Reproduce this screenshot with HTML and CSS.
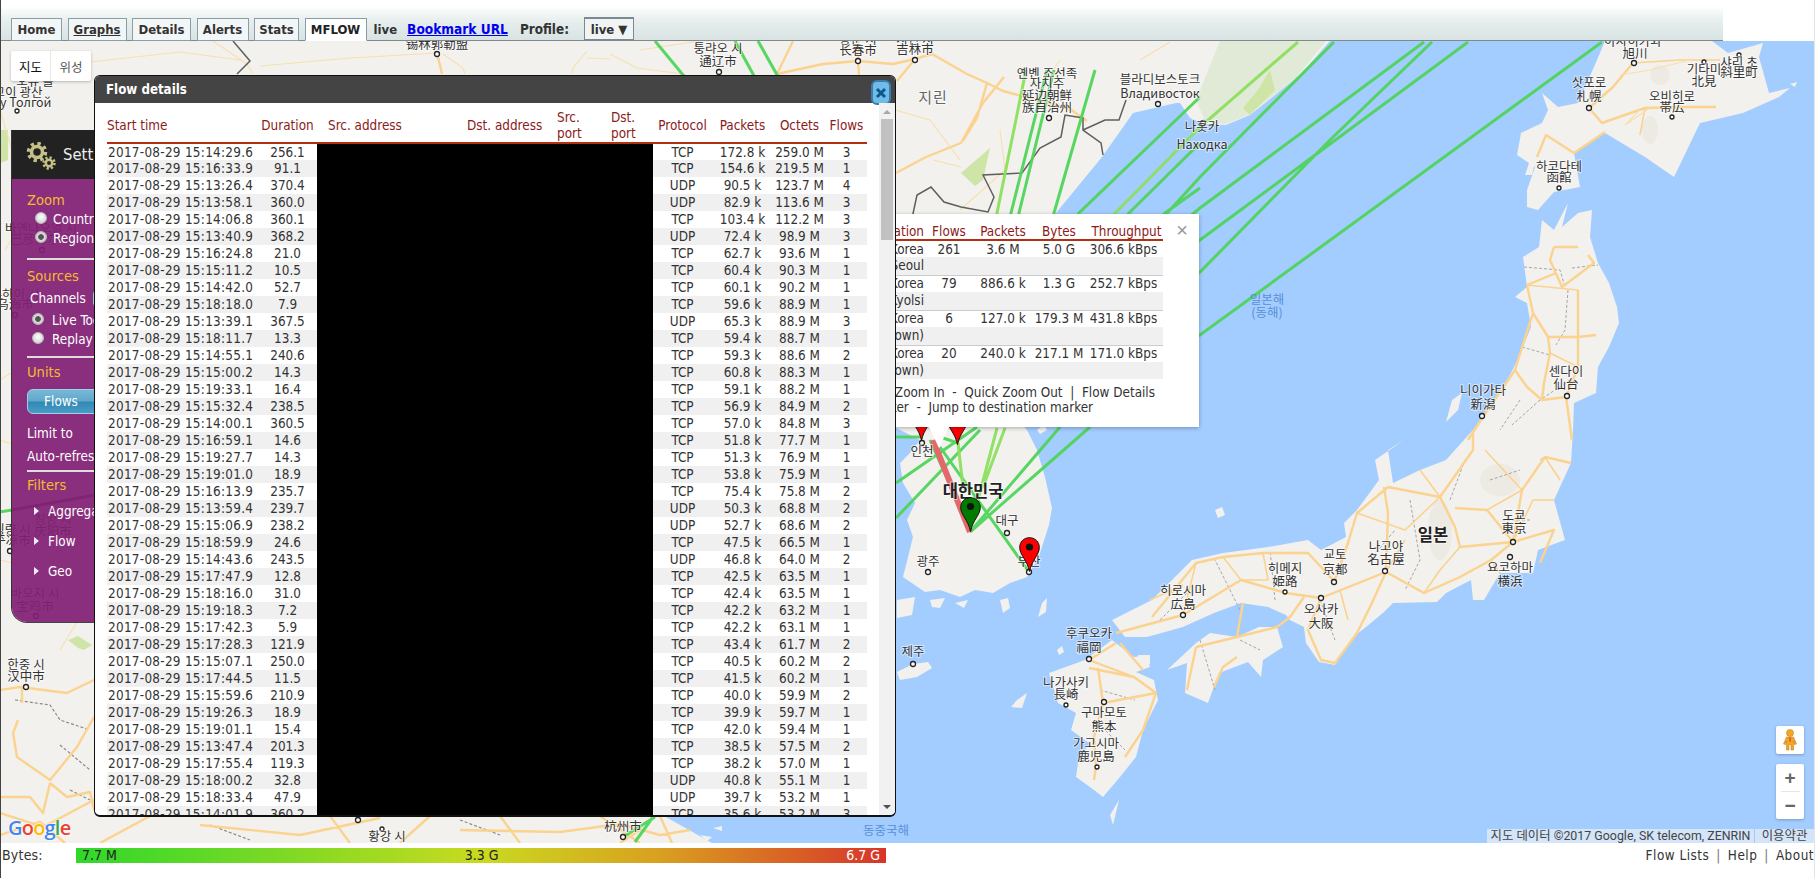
FILE: index.html
```html
<!DOCTYPE html>
<html lang="en">
<head>
<meta charset="utf-8">
<title>MFLOW</title>
<link rel="stylesheet" href="styles.css">
</head>
<body>
<div class="page">
  <header class="topbar">
    <nav class="tabs">
      <a class="tab t-home">Home</a>
      <a class="tab t-graphs under">Graphs</a>
      <a class="tab t-details">Details</a>
      <a class="tab t-alerts">Alerts</a>
      <a class="tab t-stats">Stats</a>
      <a class="tab t-mflow active">MFLOW</a>
    </nav>
    <span class="top-text t-live">live</span>
    <a class="bookmark">Bookmark URL</a>
    <span class="top-text t-profile">Profile:</span>
    <button class="profile-btn">live ▼</button>
  </header>

  <main class="map">
    <svg class="mapsvg" viewBox="1 41 1813 802" width="1813" height="802" xmlns="http://www.w3.org/2000/svg">
      <defs>
        <path id="pin" d="M10.5 .7C4.7 .7 .7 5 .7 10.5C.7 18 8 22.500 10.500 34.500C13 22.500 20.300 18 20.300 10.500C20.300 5 16.300 .7 10.500 .7Z"/>
        <clipPath id="above"><rect x="0" y="41" width="1817" height="384"/></clipPath>
      </defs>
      <rect class="water" x="0" y="41" width="1817" height="802"/>
      <!-- mainland -->
      <path class="land" d="M0 41H1330L1300 75L1250 115L1226 125L1206 124L1190 118L1180 103L1176 103L1133 113L1102 157L1056 213L1040 300L1000 400L1027 430L1037 450L1045 477L1052 508L1049 525L1040 553L1034 565L1027 577L1010 583L993 593L975 590L960 597L940 590L925 592L903 577L908 557L913 537L907 520L915 503L903 483L900 463L910 453L920 440L880 420L800 470L700 700L666 817L689 830L712 843H0Z"/>
      <path class="rus" d="M1196 100L1220 41H1326L1296 78L1248 115L1226 124L1206 123Z"/>
      <path class="park" d="M961 173L990 148L983 180L975 186Z"/>
      <path class="park" d="M0 130H8V160L0 163Z"/>
      <path class="park" d="M1258 90L1270 70L1275 90L1250 115L1243 108Z"/>
      <path class="park" d="M68 640L78 636L92 645L84 650L78 648Z"/>
      <!-- Japan -->
      <path class="land" d="M1542 93L1558 107L1578 103L1594 67L1605 41H1712L1728 53L1763 43L1759 57L1769 93L1790 88L1779 97L1743 113L1700 123L1674 177L1645 157L1605 133L1594 140L1574 153L1580 187L1554 192L1538 210L1527 207L1527 190L1535 167L1517 155L1521 133L1542 123L1548 110Z"/>
      <path class="land" d="M1568 203L1562 227L1578 213L1592 210L1590 237L1598 263L1609 283L1617 307L1619 323L1609 347L1598 367L1596 393L1574 403L1573 430L1571 463L1554 500L1565 540L1538 550L1533 573L1500 573L1484 600L1473 600L1471 580L1446 593L1437 602L1393 603L1384 612L1366 627L1353 637L1335 665L1319 662L1306 643L1304 627L1290 620L1286 615L1268 607L1241 603L1214 613L1183 627L1147 637L1125 637L1112 620L1152 600L1192 560L1223 553L1268 547L1308 540L1321 550L1346 537L1344 523L1357 510L1379 480L1375 460L1404 440L1388 450L1393 483L1420 470L1446 460L1473 430L1495 400L1511 373L1519 357L1531 327L1527 303L1515 297L1527 287L1523 257L1539 247L1542 220L1554 230Z"/>
      <path class="land" d="M1167 670L1196 643L1210 633L1237 637L1259 627L1277 627L1283 647L1263 660L1261 677L1248 662L1219 673L1208 703L1185 693L1187 663Z"/>
      <path class="land" d="M1112 640L1134 657L1147 655L1150 667L1136 672L1154 680L1158 700L1143 730L1136 757L1120 777L1103 797L1094 790L1076 777L1078 763L1089 743L1071 730L1076 713L1058 703L1049 673L1085 660Z"/>
      <path class="land" d="M1446 422L1452 400L1462 393L1458 410Z"/>
      <path class="land" d="M1525 175L1530 160L1535 162L1532 175Z"/>
      <path class="land" d="M1038 617L1042 603L1047 598L1046 612Z"/>
      <path class="land" d="M1011 707L1017 700L1027 693L1022 708Z"/>
      <path class="land" d="M1215 510L1222 507L1225 515L1218 518Z"/>
      <path class="land" d="M1057 650L1062 646L1064 652L1059 655Z"/>
      <path class="land" d="M1138 655L1150 655L1150 664L1140 662Z"/>
      <path class="land" d="M1110 815L1116 805L1119 800L1113 825Z"/>
      <path class="land" d="M1790 84L1797 82L1795 87Z"/>
      <!-- Jeju and southern islets -->
      <path class="land" d="M897 672L913 664L928 662L932 668L917 677L900 680Z"/>
      <path class="land" d="M897 600L915 597L912 615L897 618Z"/>
      <path class="land" d="M930 600L945 598L940 608L932 607Z"/>
      <path class="land" d="M1000 600L1008 598L1010 608L1003 613Z"/>
      <path class="land" d="M955 603L968 600L964 608Z"/>
      <path class="land" d="M1037 430L1044 425L1047 430L1040 434Z"/>
      <path class="land" d="M713 828L722 826L722 831Z"/>
      <path class="land" d="M700 835L712 837L707 841Z"/>
      <!-- relief -->
      <ellipse class="relief" cx="1440" cy="530" rx="12" ry="30"/>
      <ellipse class="relief" cx="1500" cy="480" rx="20" ry="16"/>
      <ellipse class="relief" cx="1650" cy="130" rx="8" ry="14"/>
      <ellipse class="relief" cx="1660" cy="75" rx="10" ry="10"/>
      <!-- prefecture dashes -->
      <path class="dash" d="M1524 267L1560 270L1565 287M1568 290L1565 330L1556 345M1522 347L1550 355M1572 268L1598 265M1540 400L1512 425M1570 380L1540 400M1410 500L1420 560L1405 590M1450 500L1465 460M1490 480L1520 470M1530 520L1500 520M1240 610L1215 560M1275 600L1270 550M1200 640L1215 690M1240 640L1260 650M1100 690L1135 700M1095 720L1125 750M1320 600L1335 640M1370 560L1395 530M1160 620L1190 590M1520 400L1500 430"/>
      <path class="dash dark" d="M15 700L50 705L60 720L90 730M60 745L90 770M70 790L90 800M460 820L500 835M210 825L250 840"/>
      <!-- roads -->
      <path class="road" d="M1589 108L1613 87L1633 63M1589 108L1602 123L1645 108L1688 107L1716 107M1605 132L1574 153L1546 135L1537 157"/>
      <path class="road" d="M1554 247L1578 247M1554 247L1550 260L1562 287L1594 263L1588 255M1556 273L1527 285L1533 313L1548 337L1550 353L1544 383L1542 400L1566 397M1578 290L1578 367L1566 397L1572 440M1533 313L1519 357L1515 370L1483 417L1468 440M1548 337L1578 337L1596 335M1515 370L1527 387L1542 400"/>
      <path class="road" d="M1571 463L1545 457L1522 490L1513 542M1513 542L1460 547L1455 527L1440 497L1473 450L1473 430M1440 497L1388 487L1357 513L1348 543L1335 580M1513 542L1487 510L1455 508M1513 542L1554 530L1540 563M1513 542L1491 560L1460 577L1424 593L1386 572L1321 598L1286 593L1241 580L1183 615L1116 633M1386 572L1388 513L1384 487M1335 582L1308 553L1263 553L1223 557L1196 563L1152 617M1321 598L1308 630L1321 660L1335 663L1357 633L1370 607L1386 572"/>
      <path class="road" d="M1196 647L1237 637L1277 627L1290 617L1304 597M1237 637L1243 603M1196 647L1187 690M1214 687L1223 667L1237 657M1089 660L1116 643M1089 660L1134 677L1156 693L1143 730L1125 757M1089 668L1134 677M1103 703L1156 693M1098 668L1103 703L1094 737L1096 767L1094 780M1120 643L1143 670"/>
      <path class="road minor" d="M1420 470L1440 497M1460 547L1440 570L1424 593M1491 560L1500 573M1513 542L1533 500L1554 500M1522 490L1487 510M1405 540L1386 572M1357 513L1405 530L1440 497M1340 590L1348 620M1263 553L1268 580L1241 580M1223 557L1241 580M1196 563L1183 615M1150 600L1183 585M1645 108L1640 135M1633 63L1680 60L1720 60M1527 285L1578 290M1550 353L1578 367M1540 460L1545 457L1560 480M1485 450L1522 490"/>
      <path class="road" d="M896 173L926 157L961 143L983 103L1004 77M932 54L967 74L987 83L1003 91L1070 109L1087 121M777 74L823 64L858 61L893 64L915 59L897 81M858 41L858 61L859 75M777 74L793 41M987 83L977 118L963 141M915 59L932 54M437 53L442 74M0 690L20 687L43 690L67 693L94 680M22 687L22 703M18 720L13 733L17 757L50 780L77 747L94 717M50 783L67 797L90 792L94 810M0 797L30 797L43 813L50 783M0 813L43 827L94 800"/>
      <path class="road" d="M0 835L40 822L65 843M100 843L150 816M200 825L300 835L380 818M400 843L430 816M500 816L520 843M560 832L620 824L660 835L690 830M600 816L640 843M460 830L560 832M620 843L640 830M660 816L672 843M330 816L350 843"/>
      <path class="thin" d="M213 41L247 64L253 74M443 54L463 68L465 74M587 51L573 68L572 74M587 58L610 59M610 54L637 68L683 74M90 62L180 52L240 60M260 66L350 58L437 53M933 160L961 167M895 110L930 120L960 160M1000 130L1005 170L960 210M1040 90L1060 60M1640 110L1625 125L1650 108M1690 60L1650 70L1620 75M0 110L12 150M5 250L30 210L90 190M0 380L30 360L90 300M0 440L60 460L90 430M30 540L90 520M0 560L40 570L80 590M90 600L60 650M640 50L700 41M1140 60L1170 42"/>
      <path class="border" d="M911 223L917 195L931 187L944 202L961 207L988 212L994 197L983 175L1022 173L1040 148L1061 137L1065 115L1083 118L1083 130L1101 143L1103 155M1083 130L1105 120L1119 120L1126 100M233 41L250 61L237 74"/>
      <!-- flows -->
      <g clip-path="url(#above)">
        <path class="flow" d="M655 41L985 440M735 41L985 500M758 41L985 445"/>
        <path class="flow lite" d="M1026 70L997 213L958 430M1298 42L1200 127L1000 330L983 487"/>
        <path class="flow" d="M1047 70L1011 213L963 487M1054 70L1019 213L985 440M1095 70L1054 213L1000 420M1200 97L1079 213L960 440M1200 143L1129 213L940 430M1200 188L1165 213L935 440M1334 42L1200 177L970 430M1424 42L1200 208L930 430M1432 42L1330 140L1200 272L925 440M1468 42L1200 240L915 440M1602 42L1200 335L960 440"/>
      </g>
      <path class="flow" d="M896 483L977 427M896 518L980 430M970 532L1060 427M970 532L1090 427M1029 572L940 447M970 530L930 440M896 437L920 437M940 437L958 443M623 837L655 817M635 842L653 817M0 512L12 510"/>
      <path class="flow lite" d="M983 487L1005 428M978 500L997 428M963 487L958 443"/>
      <path class="flowred" d="M970 532L933 440"/>
      <path class="flowgray" d="M12 510L95 495"/>
      <!-- city dots -->
      <g class="dots">
        <circle cx="437" cy="54" r="2.500"/><circle cx="719" cy="72" r="2.500"/><circle cx="858" cy="61" r="2.500"/><circle cx="915" cy="60" r="2.500"/><circle cx="1049" cy="118" r="2.500"/><circle cx="1158" cy="104" r="2.500"/><circle cx="1203" cy="123" r="2.500"/><circle cx="1634" cy="63" r="2.500"/><circle cx="1739" cy="55" r="2"/><circle cx="1704" cy="62" r="2"/><circle cx="1589" cy="108" r="2.500"/><circle cx="1672" cy="117" r="2"/><circle cx="1559" cy="188" r="2"/><circle cx="1482" cy="416" r="2.500"/><circle cx="1567" cy="396" r="2.500"/><circle cx="1513" cy="542" r="2.500"/><circle cx="1510" cy="557" r="2.500"/><circle cx="1385" cy="571" r="2.500"/><circle cx="1334" cy="582" r="2.500"/><circle cx="1285" cy="592" r="2"/><circle cx="1321" cy="598" r="2.500"/><circle cx="1183" cy="615" r="2.500"/><circle cx="1089" cy="659" r="2.500"/><circle cx="1066" cy="705" r="2"/><circle cx="1104" cy="702" r="2.500"/><circle cx="1097" cy="767" r="2"/><circle cx="922" cy="443" r="2.500"/><circle cx="1007" cy="533" r="2.500"/><circle cx="1029" cy="572" r="2.500"/><circle cx="928" cy="572" r="2.500"/><circle cx="913" cy="664" r="2.500"/><circle cx="26" cy="687" r="2.500"/><circle cx="36" cy="616" r="2.500"/><circle cx="10" cy="551" r="2.500"/><circle cx="42" cy="250" r="2.500"/><circle cx="15" cy="315" r="2.500"/><circle cx="17" cy="111" r="2"/><circle cx="358" cy="820" r="2.500"/><circle cx="382" cy="829" r="2"/><circle cx="623" cy="837" r="2.500"/>
      </g>
      <!-- labels -->
      <g class="labels">
        <text x="437" y="49">锡林郭勒盟</text>
        <text x="718" y="53">퉁랴오 시</text><text x="718" y="66">通辽市</text>
        <text x="858" y="44">창춘 시</text><text x="858" y="55">长春市</text>
        <text x="915" y="44">지린 시</text><text x="915" y="54">吉林市</text>
        <text class="big" x="933" y="103">지린</text>
        <text x="1047" y="78">옌볜 조선족</text><text x="1047" y="88">자치주</text><text x="1047" y="100">延边朝鲜</text><text x="1047" y="112">族自治州</text>
        <text x="1160" y="84">블라디보스토크</text><text x="1160" y="98">Владивосток</text>
        <text x="1202" y="131">나홋카</text><text x="1202" y="149">Находка</text>
        <text x="1633" y="46">아사히카와</text><text x="1635" y="58">旭川</text>
        <text x="1739" y="67">샤리 초</text><text x="1739" y="77">斜里町</text>
        <text x="1704" y="74">기타미</text><text x="1704" y="86">北見</text>
        <text x="1589" y="87">삿포로</text><text x="1589" y="101">札幌</text>
        <text x="1672" y="101">오비히로</text><text x="1672" y="112">帯広</text>
        <text x="1559" y="171">하코다테</text><text x="1559" y="182">函館</text>
        <text x="1483" y="395">니이가타</text><text x="1483" y="409">新潟</text>
        <text x="1566" y="376">센다이</text><text x="1566" y="389">仙台</text>
        <text class="sea" x="1267" y="304">일본해</text><text class="sea" x="1267" y="317">(동해)</text>
        <text x="1514" y="520">도쿄</text><text x="1514" y="533">東京</text>
        <text class="bold" x="1433" y="541">일본</text>
        <text x="1510" y="572">요코하마</text><text x="1510" y="586">横浜</text>
        <text x="1386" y="551">나고야</text><text x="1386" y="564">名古屋</text>
        <text x="1335" y="559">교토</text><text x="1335" y="574">京都</text>
        <text x="1285" y="573">히메지</text><text x="1285" y="586">姫路</text>
        <text x="1321" y="614">오사카</text><text x="1321" y="628">大阪</text>
        <text x="1183" y="595">히로시마</text><text x="1183" y="609">広島</text>
        <text x="1089" y="638">후쿠오카</text><text x="1089" y="652">福岡</text>
        <text x="1066" y="687">나가사키</text><text x="1066" y="699">長崎</text>
        <text x="1104" y="717">구마모토</text><text x="1104" y="731">熊本</text>
        <text x="1096" y="748">가고시마</text><text x="1096" y="761">鹿児島</text>
        <text x="922" y="456">인천</text>
        <text class="bold" x="973" y="497">대한민국</text>
        <text x="1007" y="525">대구</text>
        <text x="1029" y="566">부산</text>
        <text x="928" y="566">광주</text>
        <text x="913" y="656">제주</text>
        <text x="35" y="86">오유 틀</text><text x="18" y="97">고이 광산</text><text x="22" y="107">oy Толгой</text>
        <text x="41" y="233">바옌나오얼 시</text><text x="41" y="244">巴彦淖尔市</text>
        <text x="15" y="299">우하이 시</text><text x="15" y="309">乌海市</text>
        <text x="12" y="534">핑량 시</text><text x="12" y="545">平凉市</text>
        <text x="53" y="524">칭양 시</text><text x="53" y="536">庆阳市</text>
        <text x="35" y="598">바오지 시</text><text x="35" y="611">宝鸡市</text>
        <text x="26" y="669">한중 시</text><text x="26" y="681">汉中市</text>
        <text x="387" y="841">황강 시</text>
        <text x="623" y="831">杭州市</text>
        <text class="sea" x="886" y="835">동중국해</text>
      </g>
      <!-- markers -->
      <use class="pin-red" href="#pin" x="911" y="406"/>
      <use class="pin-red" href="#pin" x="947" y="410"/>
      <circle class="pin-eye" cx="921.500" cy="416" r="3.600"/>
      <circle class="pin-eye" cx="957.500" cy="420" r="3.600"/>
      <use class="pin-green" href="#pin" x="960" y="497"/>
      <circle class="pin-eye" cx="970.500" cy="506.500" r="3.600"/>
      <use class="pin-red" href="#pin" x="1019" y="537"/>
      <circle class="pin-eye" cx="1029.500" cy="547" r="3.600"/>
    </svg>

    <div class="maptype">
      <span class="mt-btn mt-on">지도</span>
      <span class="mt-btn">위성</span>
    </div>

    <aside class="settings">
      <div class="set-head">
        <svg class="gears" viewBox="0 0 30 28" width="30" height="28" xmlns="http://www.w3.org/2000/svg">
          <circle class="gear-teeth" cx="11" cy="10" r="8.500"/><circle class="gear" cx="11" cy="10" r="5.500"/>
          <circle class="gear-teeth small" cx="23" cy="21" r="5.500"/><circle class="gear small" cx="23" cy="21" r="3.200"/>
        </svg>
        <span class="set-title">Settings</span>
      </div>
      <div class="set-body">
        <div class="set-label">Zoom</div>
        <label class="radio-row"><input type="radio" name="zoom"><span>Country</span></label>
        <label class="radio-row"><input type="radio" name="zoom" checked><span>Region</span></label>
        <hr class="set-hr">
        <div class="set-label l-sources">Sources</div>
        <div class="channels"><span>Channels</span><span class="chan-btn">all</span></div>
        <label class="radio-row r-src"><input type="radio" name="src" checked><span>Live Tools</span></label>
        <label class="radio-row r-src2"><input type="radio" name="src"><span>Replay</span></label>
        <hr class="set-hr hr2">
        <div class="set-label l-units">Units</div>
        <button class="flows-btn">Flows</button>
        <div class="set-text t-limit">Limit to</div>
        <div class="set-text t-auto">Auto-refresh</div>
        <hr class="set-hr hr3">
        <div class="set-label l-filters">Filters</div>
        <div class="filter f-first"><i class="tri"></i>Aggregation</div>
        <div class="filter"><i class="tri"></i>Flow</div>
        <div class="filter"><i class="tri"></i>Geo</div>
      </div>
    </aside>

    <section class="popup">
      <button class="popup-x">×</button>
      <table class="ptable">
        <thead><tr><th class="p-dest">Destination</th><th>Flows</th><th>Packets</th><th>Bytes</th><th class="p-thru">Throughput</th></tr></thead>
        <tbody>
          <tr><td class="p-dest">South Korea</td><td>261</td><td>3.6 M</td><td>5.0 G</td><td>306.6 kBps</td></tr>
          <tr class="p-sub"><td class="p-dest">Seoul</td><td colspan="4"></td></tr>
          <tr><td class="p-dest">South Korea</td><td>79</td><td>886.6 k</td><td>1.3 G</td><td>252.7 kBps</td></tr>
          <tr class="p-sub"><td class="p-dest">Kyolsi</td><td colspan="4"></td></tr>
          <tr><td class="p-dest">South Korea</td><td>6</td><td>127.0 k</td><td>179.3 M</td><td>431.8 kBps</td></tr>
          <tr class="p-sub"><td class="p-dest">(unknown)</td><td colspan="4"></td></tr>
          <tr><td class="p-dest">South Korea</td><td>20</td><td>240.0 k</td><td>217.1 M</td><td>171.0 kBps</td></tr>
          <tr class="p-sub"><td class="p-dest">(unknown)</td><td colspan="4"></td></tr>
        </tbody>
      </table>
      <p class="p-actions a1">Quick Zoom In &nbsp;-&nbsp; Quick Zoom Out &nbsp;|&nbsp; Flow Details</p>
      <p class="p-actions a2">Jump to source marker &nbsp;-&nbsp; Jump to destination marker</p>
      <i class="pointer"></i>
    </section>

    <section class="modal">
      <div class="modal-title">Flow details</div>
      <button class="modal-close" aria-label="close">
        <svg viewBox="0 0 12 12" width="12" height="12" xmlns="http://www.w3.org/2000/svg"><path class="x-mark" d="M2 2L10 10M10 2L2 10"/></svg>
      </button>
      <div class="modal-body">
        <div class="scroll-area">
          <table class="ftable">
            <colgroup><col class="c-time"><col class="c-dur"><col class="c-src"><col class="c-dst"><col class="c-sp"><col class="c-dp"><col class="c-proto"><col class="c-pk"><col class="c-oc"><col class="c-fl"></colgroup>
            <thead><tr><th class="left">Start time</th><th>Duration</th><th class="left pad">Src. address</th><th class="left pad">Dst. address</th><th class="left pad">Src.<br>port</th><th class="left pad">Dst.<br>port</th><th>Protocol</th><th>Packets</th><th>Octets</th><th>Flows</th></tr></thead>
            <tbody>
              <tr><td>2017-08-29 15:14:29.6</td><td>256.1</td><td class="redact" colspan="4"></td><td>TCP</td><td>172.8 k</td><td>259.0 M</td><td>3</td></tr>
              <tr><td>2017-08-29 15:16:33.9</td><td>91.1</td><td class="redact" colspan="4"></td><td>TCP</td><td>154.6 k</td><td>219.5 M</td><td>1</td></tr>
              <tr><td>2017-08-29 15:13:26.4</td><td>370.4</td><td class="redact" colspan="4"></td><td>UDP</td><td>90.5 k</td><td>123.7 M</td><td>4</td></tr>
              <tr><td>2017-08-29 15:13:58.1</td><td>360.0</td><td class="redact" colspan="4"></td><td>UDP</td><td>82.9 k</td><td>113.6 M</td><td>3</td></tr>
              <tr><td>2017-08-29 15:14:06.8</td><td>360.1</td><td class="redact" colspan="4"></td><td>TCP</td><td>103.4 k</td><td>112.2 M</td><td>3</td></tr>
              <tr><td>2017-08-29 15:13:40.9</td><td>368.2</td><td class="redact" colspan="4"></td><td>UDP</td><td>72.4 k</td><td>98.9 M</td><td>3</td></tr>
              <tr><td>2017-08-29 15:16:24.8</td><td>21.0</td><td class="redact" colspan="4"></td><td>TCP</td><td>62.7 k</td><td>93.6 M</td><td>1</td></tr>
              <tr><td>2017-08-29 15:15:11.2</td><td>10.5</td><td class="redact" colspan="4"></td><td>TCP</td><td>60.4 k</td><td>90.3 M</td><td>1</td></tr>
              <tr><td>2017-08-29 15:14:42.0</td><td>52.7</td><td class="redact" colspan="4"></td><td>TCP</td><td>60.1 k</td><td>90.2 M</td><td>1</td></tr>
              <tr><td>2017-08-29 15:18:18.0</td><td>7.9</td><td class="redact" colspan="4"></td><td>TCP</td><td>59.6 k</td><td>88.9 M</td><td>1</td></tr>
              <tr><td>2017-08-29 15:13:39.1</td><td>367.5</td><td class="redact" colspan="4"></td><td>UDP</td><td>65.3 k</td><td>88.9 M</td><td>3</td></tr>
              <tr><td>2017-08-29 15:18:11.7</td><td>13.3</td><td class="redact" colspan="4"></td><td>TCP</td><td>59.4 k</td><td>88.7 M</td><td>1</td></tr>
              <tr><td>2017-08-29 15:14:55.1</td><td>240.6</td><td class="redact" colspan="4"></td><td>TCP</td><td>59.3 k</td><td>88.6 M</td><td>2</td></tr>
              <tr><td>2017-08-29 15:15:00.2</td><td>14.3</td><td class="redact" colspan="4"></td><td>TCP</td><td>60.8 k</td><td>88.3 M</td><td>1</td></tr>
              <tr><td>2017-08-29 15:19:33.1</td><td>16.4</td><td class="redact" colspan="4"></td><td>TCP</td><td>59.1 k</td><td>88.2 M</td><td>1</td></tr>
              <tr><td>2017-08-29 15:15:32.4</td><td>238.5</td><td class="redact" colspan="4"></td><td>TCP</td><td>56.9 k</td><td>84.9 M</td><td>2</td></tr>
              <tr><td>2017-08-29 15:14:00.1</td><td>360.5</td><td class="redact" colspan="4"></td><td>TCP</td><td>57.0 k</td><td>84.8 M</td><td>3</td></tr>
              <tr><td>2017-08-29 15:16:59.1</td><td>14.6</td><td class="redact" colspan="4"></td><td>TCP</td><td>51.8 k</td><td>77.7 M</td><td>1</td></tr>
              <tr><td>2017-08-29 15:19:27.7</td><td>14.3</td><td class="redact" colspan="4"></td><td>TCP</td><td>51.3 k</td><td>76.9 M</td><td>1</td></tr>
              <tr><td>2017-08-29 15:19:01.0</td><td>18.9</td><td class="redact" colspan="4"></td><td>TCP</td><td>53.8 k</td><td>75.9 M</td><td>1</td></tr>
              <tr><td>2017-08-29 15:16:13.9</td><td>235.7</td><td class="redact" colspan="4"></td><td>TCP</td><td>75.4 k</td><td>75.8 M</td><td>2</td></tr>
              <tr><td>2017-08-29 15:13:59.4</td><td>239.7</td><td class="redact" colspan="4"></td><td>UDP</td><td>50.3 k</td><td>68.8 M</td><td>2</td></tr>
              <tr><td>2017-08-29 15:15:06.9</td><td>238.2</td><td class="redact" colspan="4"></td><td>UDP</td><td>52.7 k</td><td>68.6 M</td><td>2</td></tr>
              <tr><td>2017-08-29 15:18:59.9</td><td>24.6</td><td class="redact" colspan="4"></td><td>TCP</td><td>47.5 k</td><td>66.5 M</td><td>1</td></tr>
              <tr><td>2017-08-29 15:14:43.6</td><td>243.5</td><td class="redact" colspan="4"></td><td>UDP</td><td>46.8 k</td><td>64.0 M</td><td>2</td></tr>
              <tr><td>2017-08-29 15:17:47.9</td><td>12.8</td><td class="redact" colspan="4"></td><td>TCP</td><td>42.5 k</td><td>63.5 M</td><td>1</td></tr>
              <tr><td>2017-08-29 15:18:16.0</td><td>31.0</td><td class="redact" colspan="4"></td><td>TCP</td><td>42.4 k</td><td>63.5 M</td><td>1</td></tr>
              <tr><td>2017-08-29 15:19:18.3</td><td>7.2</td><td class="redact" colspan="4"></td><td>TCP</td><td>42.2 k</td><td>63.2 M</td><td>1</td></tr>
              <tr><td>2017-08-29 15:17:42.3</td><td>5.9</td><td class="redact" colspan="4"></td><td>TCP</td><td>42.2 k</td><td>63.1 M</td><td>1</td></tr>
              <tr><td>2017-08-29 15:17:28.3</td><td>121.9</td><td class="redact" colspan="4"></td><td>TCP</td><td>43.4 k</td><td>61.7 M</td><td>2</td></tr>
              <tr><td>2017-08-29 15:15:07.1</td><td>250.0</td><td class="redact" colspan="4"></td><td>TCP</td><td>40.5 k</td><td>60.2 M</td><td>2</td></tr>
              <tr><td>2017-08-29 15:17:44.5</td><td>11.5</td><td class="redact" colspan="4"></td><td>TCP</td><td>41.5 k</td><td>60.2 M</td><td>1</td></tr>
              <tr><td>2017-08-29 15:15:59.6</td><td>210.9</td><td class="redact" colspan="4"></td><td>TCP</td><td>40.0 k</td><td>59.9 M</td><td>2</td></tr>
              <tr><td>2017-08-29 15:19:26.3</td><td>18.9</td><td class="redact" colspan="4"></td><td>TCP</td><td>39.9 k</td><td>59.7 M</td><td>1</td></tr>
              <tr><td>2017-08-29 15:19:01.1</td><td>15.4</td><td class="redact" colspan="4"></td><td>TCP</td><td>42.0 k</td><td>59.4 M</td><td>1</td></tr>
              <tr><td>2017-08-29 15:13:47.4</td><td>201.3</td><td class="redact" colspan="4"></td><td>TCP</td><td>38.5 k</td><td>57.5 M</td><td>2</td></tr>
              <tr><td>2017-08-29 15:17:55.4</td><td>119.3</td><td class="redact" colspan="4"></td><td>TCP</td><td>38.2 k</td><td>57.0 M</td><td>1</td></tr>
              <tr><td>2017-08-29 15:18:00.2</td><td>32.8</td><td class="redact" colspan="4"></td><td>UDP</td><td>40.8 k</td><td>55.1 M</td><td>1</td></tr>
              <tr><td>2017-08-29 15:18:33.4</td><td>47.9</td><td class="redact" colspan="4"></td><td>UDP</td><td>39.7 k</td><td>53.2 M</td><td>1</td></tr>
              <tr><td>2017-08-29 15:14:01.9</td><td>360.2</td><td class="redact" colspan="4"></td><td>TCP</td><td>35.6 k</td><td>53.2 M</td><td>3</td></tr>
            </tbody>
          </table>
        </div>
        <div class="scrollbar">
          <i class="arrow-up"></i>
          <i class="thumb"></i>
          <i class="arrow-down"></i>
        </div>
      </div>
    </section>

    <div class="google"><span class="g-b">G</span><span class="g-r">o</span><span class="g-y">o</span><span class="g-b">g</span><span class="g-g">l</span><span class="g-r">e</span></div>

    <div class="map-controls">
      <div class="ctl-box ctl-peg">
        <svg viewBox="0 0 16 22" width="16" height="22" xmlns="http://www.w3.org/2000/svg">
          <circle class="peg" cx="8" cy="4" r="3.500"/>
          <path class="peg" d="M4.500 8H11.500L14.500 15L12.500 15.500L11.500 12V21H9V15.500H7V21H4.500V12L3.500 15.500L1.500 15Z"/>
          <path class="peg-tie" d="M7.200 8.500H8.800L8.500 13H7.500Z"/>
        </svg>
      </div>
      <div class="ctl-box ctl-zoom">
        <span class="zoom-key">+</span>
        <i class="zoom-div"></i>
        <span class="zoom-key">−</span>
      </div>
    </div>

    <div class="attrib">
      <span class="att-seg att-main">지도 데이터 ©2017 Google, SK telecom, ZENRIN</span>
      <span class="att-seg att-terms">이용약관</span>
    </div>
  </main>

  <footer class="footer">
    <span class="legend-name">Bytes:</span>
    <div class="legend-bar"><span class="lg-min">7.7 M</span><span class="lg-mid">3.3 G</span><span class="lg-max">6.7 G</span></div>
    <div class="foot-links"><a>Flow Lists</a><i>|</i><a>Help</a><i>|</i><a>About</a></div>
  </footer>
</div>
</body>
</html>
```

FILE: styles.css
```css
* { box-sizing: border-box; }
html, body { margin: 0; padding: 0; height: 100%; background: #fff; overflow: hidden; }
body {
  font-family: "DejaVu Sans Condensed", "DejaVu Sans", "Liberation Sans", sans-serif;
  font-size: 13.4px;
  color: #333;
}
.page {
  width: 1815px;
  height: 878px;
  border-left: 1px solid #444;
  border-right: 1px solid #e4e4e4;
  display: flex;
  flex-direction: column;
  overflow: hidden;
}

/* top bar */
.topbar {
  height: 41px;
  width: 1722px;
  flex: none;
  display: flex;
  align-items: flex-end;
  padding-left: 10px;
  background: linear-gradient(#fff 0, #fff 15%, #e8efee 50%, #d8e3e3 100%);
  border-bottom: 1px solid #7f8a8c;
}
.tabs { display: flex; gap: 5.5px; margin-bottom: -1px; }
.tab {
  height: 23px;
  display: flex;
  align-items: center;
  justify-content: center;
  border: 1px solid #8a9ea6;
  background: #f3f6f6;
  font-weight: bold;
  font-size: 13px;
  color: #333;
}
.tab.under { text-decoration: underline; }
.tab.active { background: #fff; border-bottom-color: #fff; color: #222; }
.t-home { width: 51px; }
.t-graphs { width: 59px; }
.t-details { width: 59px; }
.t-alerts { width: 52px; }
.t-stats { width: 45px; }
.t-mflow { width: 62px; }
.top-text { font-weight: bold; font-size: 13px; color: #333; margin-bottom: 3px; }
.t-live { margin-left: 7px; }
.bookmark { margin-left: 10px; margin-bottom: 3px; font-weight: bold; font-size: 13.6px; color: #00e; text-decoration: underline; }
.t-profile { margin-left: 12px; font-size: 13.4px; }
.profile-btn {
  margin-left: 15px;
  width: 50px;
  height: 23px;
  font: bold 13px "DejaVu Sans Condensed", "DejaVu Sans", sans-serif;
  color: #333;
  background: #f0f4f4;
  border: 1px solid #7a8a90;
  border-top-width: 2px;
  padding: 0;
}

/* map */
.map { position: relative; flex: none; height: 802px; overflow: hidden; width: 1813px; }
.mapsvg { display: block; position: absolute; left: 0; top: 0; }
.water { fill: #a3ccff; }
.land { fill: #f2f1ee; }
.rus { fill: #e0ead6; }
.park { fill: #cfe5a8; }
.relief { fill: #e4e2d2; opacity: .45; }
.road { fill: none; stroke: #fbd28e; stroke-width: 2.4; stroke-linejoin: round; }
.road.minor { stroke-width: 1.6; }
.thin { fill: none; stroke: #f8dfae; stroke-width: 1.1; }
.dash { fill: none; stroke: #a6a6a6; stroke-width: 1; stroke-dasharray: 3 2; }
.dash.dark { stroke: #8a8a8a; stroke-width: 1.2; }
.border { fill: none; stroke: #5f5f5f; stroke-width: 1.5; }
.flow { fill: none; stroke: #4fd45a; stroke-width: 3; opacity: .95; }
.flow.lite { stroke: #8bdf5c; }
.flowred { fill: none; stroke: #e2686b; stroke-width: 6; }
.flowgray { fill: none; stroke: #555; stroke-width: 3; }
.dots circle { fill: #fff; stroke: #222; stroke-width: 1.3; }
.labels text {
  font-family: "Noto Sans CJK KR", "Noto Sans CJK SC", sans-serif;
  font-size: 12.5px;
  text-anchor: middle;
  fill: #333;
  stroke: rgba(255, 255, 255, .55);
  stroke-width: 2px;
  paint-order: stroke;
}
.labels .bold { font-size: 16.5px; font-weight: bold; fill: #222; }
.labels .big { font-size: 15px; fill: #666; letter-spacing: 1px; }
.labels .sea { fill: #5a8fd8; stroke: none; }
.pin-red { fill: #f00; stroke: #111; stroke-width: 1; }
.pin-green { fill: #007a00; stroke: #111; stroke-width: 1; }
.pin-eye { fill: #111; }

.maptype {
  position: absolute;
  left: 10px;
  top: 10px;
  display: flex;
  background: #fff;
  border-radius: 2px;
  box-shadow: 0 1px 3px rgba(0, 0, 0, .25);
}
.mt-btn {
  width: 40px;
  height: 30px;
  display: flex;
  align-items: center;
  justify-content: center;
  font-family: "Noto Sans CJK KR", sans-serif;
  font-size: 12.5px;
  color: #555;
}
.mt-on { color: #111; border-right: 1px solid #e6e6e6; }

/* settings */
.settings {
  position: absolute;
  left: 10px;
  top: 89px;
  width: 260px;
  height: 493px;
  border-radius: 0 0 16px 16px;
  overflow: hidden;
  color: #fff;
  font-size: 13.4px;
  border-left: 1px solid #333;
  border-bottom: 1px solid #444;
}
.set-head {
  height: 49px;
  background: #222;
  display: flex;
  align-items: center;
  gap: 7px;
  padding-left: 14px;
}
.gears { flex: none; margin-top: 2px; }
.gear { fill: #222; stroke: #c4c088; stroke-width: 3.5; }
.gear.small { stroke-width: 2.5; }
.gear-teeth { fill: none; stroke: #c4c088; stroke-width: 3.5; stroke-dasharray: 3.3 3.4; }
.gear-teeth.small { stroke-width: 2.5; stroke-dasharray: 2.2 2.1; }
.set-title { font-size: 16.5px; color: #eee; }
.set-body {
  background: rgba(130, 32, 116, .93);
  height: 444px;
  padding: 11px 0 0 15px;
  display: flex;
  flex-direction: column;
  align-items: flex-start;
}
.set-body > * { flex: none; }
.set-label { height: 20px; line-height: 20px; font-size: 14.6px; color: #f5bb30; }
.radio-row { height: 19px; display: flex; align-items: center; gap: 6px; padding-left: 8px; white-space: nowrap; }
.radio-row input {
  appearance: none;
  width: 12px;
  height: 12px;
  margin: -4px 0 0 0;
  border-radius: 50%;
  background: radial-gradient(circle at 50% 40%, #fff, #d8d8d8 70%, #aaa);
  border: 1px solid #bbb;
  flex: none;
}
.radio-row input:checked { background: radial-gradient(circle, #555 0, #555 35%, #ddd 45%, #bbb 100%); }
.set-hr { width: 240px; height: 2px; margin: 10px 0 0; border: 0; background: #ddd; }
.l-sources { margin-top: 6px; }
.channels { height: 20px; margin: 2px 0 0 3px; display: flex; align-items: center; gap: 7px; white-space: nowrap; }
.chan-btn { background: #5aa8d0; border: 1px solid #9cd; border-radius: 4px; padding: 0 20px; }
.r-src { margin-top: 3px; padding-left: 5px; gap: 8px; }
.r-src2 { padding-left: 5px; gap: 8px; }
.hr2 { margin-top: 7px; }
.l-units { margin-top: 4px; }
.flows-btn {
  width: 130px;
  height: 25px;
  margin-top: 7px;
  color: #fff;
  font: 13.4px "DejaVu Sans Condensed", "DejaVu Sans", sans-serif;
  padding: 0 62px 0 0;
  border: 1px solid #9dd0e6;
  border-radius: 6px;
  background: linear-gradient(#78b8d6 0, #5fa8cc 48%, #3188b4 52%, #4a9cc6 100%);
}
.set-text { height: 20px; line-height: 20px; white-space: nowrap; }
.t-limit { margin-top: 10px; }
.t-auto { margin-top: 3px; }
.hr3 { margin-top: 3px; }
.l-filters { margin-top: 3px; }
.filter { height: 20px; margin-top: 10px; padding-left: 21px; position: relative; display: flex; align-items: center; white-space: nowrap; }
.f-first { margin-top: 6px; }
.tri {
  position: absolute;
  left: 7px;
  top: 6px;
  width: 0;
  height: 0;
  border-left: 5px solid #eef;
  border-top: 4px solid transparent;
  border-bottom: 4px solid transparent;
}

/* popup */
.popup {
  position: absolute;
  left: 779px;
  top: 173px;
  width: 419px;
  height: 213px;
  background: #fff;
  padding: 9px 0 0 8px;
  box-shadow: 0 1px 4px rgba(0, 0, 0, .3);
}
.popup-x {
  position: absolute;
  right: 11px;
  top: 6px;
  border: 0;
  background: none;
  padding: 0;
  font: 20px/20px "Liberation Sans", sans-serif;
  color: #999;
}
.ptable { border-collapse: collapse; table-layout: fixed; width: 375px; }
.ptable th { height: 17px; padding: 0; line-height: 15px; font-weight: normal; color: #8b1a1a; text-align: center; border-bottom: 2px solid #b0300f; }
.ptable td { height: 17px; padding: 0; line-height: 15px; text-align: center; white-space: nowrap; }
.ptable th:nth-child(1) { width: 138px; }
.ptable th:nth-child(2) { width: 46px; }
.ptable th:nth-child(3) { width: 62px; }
.ptable th:nth-child(4) { width: 50px; }
.ptable th:nth-child(5) { width: 79px; }
.ptable .p-thru { padding-left: 6px; }
.ptable .p-dest { text-align: right; padding-right: 2px; }
.p-sub td { background: #f0f0f0; border-bottom: 1px solid #ccc; height: 18px; }
.p-sub:last-child td { border-bottom: 0; height: 17px; }
.p-actions { margin: 0; height: 15px; line-height: 15px; white-space: nowrap; text-align: right; }
.a1 { margin-top: 6px; padding-right: 44px; }
.a2 { margin-left: -60px; padding-right: 106px; }
.pointer {
  position: absolute;
  left: 149px;
  top: 213px;
  width: 0;
  height: 0;
  border-top: 21px solid #fff;
  border-left: 10px solid transparent;
  border-right: 10px solid transparent;
}

/* modal */
.modal {
  position: absolute;
  left: 93px;
  top: 34px;
  width: 802px;
  height: 742px;
  background: #fff;
  border: 1px solid #111;
  border-bottom-width: 2px;
  border-radius: 6px;
  display: flex;
  flex-direction: column;
}
.modal-title {
  height: 27px;
  flex: none;
  background: #444;
  color: #fff;
  font-weight: bold;
  font-size: 13.2px;
  line-height: 27px;
  padding-left: 11px;
  border-radius: 5px 5px 0 0;
}
.modal-close {
  position: absolute;
  left: 776px;
  top: 4px;
  width: 20px;
  height: 25px;
  padding: 0;
  display: flex;
  align-items: center;
  justify-content: center;
  background: #6fbce8;
  border: 2px solid #3c7cb0;
  border-radius: 6px;
}
.x-mark { fill: none; stroke: #0a5a8a; stroke-width: 3; }
.modal-body { flex: 1; display: flex; min-height: 0; border-radius: 0 0 5px 5px; overflow: hidden; }
.scroll-area { flex: 1; min-width: 0; overflow: hidden; padding: 0 12px; }
.ftable { border-collapse: collapse; table-layout: fixed; width: 760px; }
.c-time { width: 151px; }
.c-dur { width: 59px; }
.c-src { width: 139px; }
.c-dst { width: 90px; }
.c-sp { width: 54px; }
.c-dp { width: 53px; }
.c-proto { width: 59px; }
.c-pk { width: 61px; }
.c-oc { width: 53px; }
.c-fl { width: 41px; }
.ftable th {
  height: 40px;
  padding: 6px 0 0;
  vertical-align: middle;
  font-weight: normal;
  line-height: 15.5px;
  color: #8b1a1a;
  text-align: center;
  border-bottom: 2px solid #b0300f;
}
.ftable th.left { text-align: left; }
.ftable th.pad { padding-left: 11px; }
.ftable td { height: 17px; padding: 0; line-height: 15px; text-align: center; white-space: nowrap; overflow: hidden; }
.ftable td:first-child { text-align: left; padding-left: 1px; letter-spacing: .28px; }
.ftable tbody tr:nth-child(even) td { background: #f0f0f0; }
.ftable td.redact, .ftable tbody tr:nth-child(even) td.redact { background: #000; }
.scrollbar {
  width: 16px;
  flex: none;
  background: #f1f1f1;
  display: flex;
  flex-direction: column;
  align-items: center;
  position: relative;
}
.arrow-up { margin-top: 7px; border-left: 4px solid transparent; border-right: 4px solid transparent; border-bottom: 4px solid #a8a8a8; }
.thumb { width: 12px; height: 121px; margin-top: 5px; background: #c1c1c1; }
.arrow-down { position: absolute; bottom: 6px; border-left: 4px solid transparent; border-right: 4px solid transparent; border-top: 4px solid #505050; }

/* map furniture */
.google {
  position: absolute;
  left: 7px;
  top: 774px;
  font: 600 20px/26px "Open Sans", "Liberation Sans", sans-serif;
  letter-spacing: -.8px;
  text-shadow: 0 0 2px #fff, 0 0 2px #fff;
}
.g-b { color: #4285f4; }
.g-r { color: #ea4335; }
.g-y { color: #fbbc05; }
.g-g { color: #34a853; }
.map-controls {
  position: absolute;
  left: 1775px;
  top: 685px;
  display: flex;
  flex-direction: column;
  gap: 10px;
}
.ctl-box { width: 28px; background: #fff; border-radius: 2px; box-shadow: 0 1px 3px rgba(0, 0, 0, .25); }
.ctl-peg { height: 28px; display: flex; align-items: center; justify-content: center; }
.peg { fill: #f5a623; stroke: #b5781a; stroke-width: .5; }
.peg-tie { fill: #d9482b; }
.ctl-zoom { height: 55px; display: flex; flex-direction: column; align-items: center; }
.zoom-key { height: 27px; font: bold 19px/27px "Liberation Sans", sans-serif; color: #666; }
.zoom-div { width: 19px; height: 1px; background: #e6e6e6; flex: none; }
.attrib {
  position: absolute;
  right: 0;
  bottom: 0;
  display: flex;
  gap: 1px;
}
.att-seg {
  height: 14px;
  line-height: 14px;
  background: rgba(245, 245, 245, .6);
  font-family: Roboto, "Noto Sans CJK KR", sans-serif;
  font-size: 12.4px;
  color: #444;
  white-space: nowrap;
  text-align: center;
}
.att-main { width: 267px; }
.att-terms { width: 59px; }

/* footer */
.footer { flex: 1; display: flex; align-items: flex-start; padding: 5px 0 0 1px; min-height: 35px; }
.legend-name { width: 74px; height: 15px; line-height: 15px; font-size: 14px; letter-spacing: .2px; color: #333; flex: none; }
.legend-bar {
  width: 810px;
  height: 15px;
  line-height: 15px;
  padding: 0 6px;
  font-size: 14px;
  display: flex;
  justify-content: space-between;
  background: linear-gradient(90deg, #2fd82a 0, #c9da20 50%, #d9a020 72%, #d8342a 100%);
  color: #222;
  flex: none;
}
.lg-max { color: #fff; }
.foot-links {
  margin-left: auto;
  display: flex;
  gap: 7px;
  font-size: 13.4px;
  letter-spacing: .5px;
  line-height: 15px;
  color: #333;
}
.foot-links i { font-style: normal; color: #777; }
```
